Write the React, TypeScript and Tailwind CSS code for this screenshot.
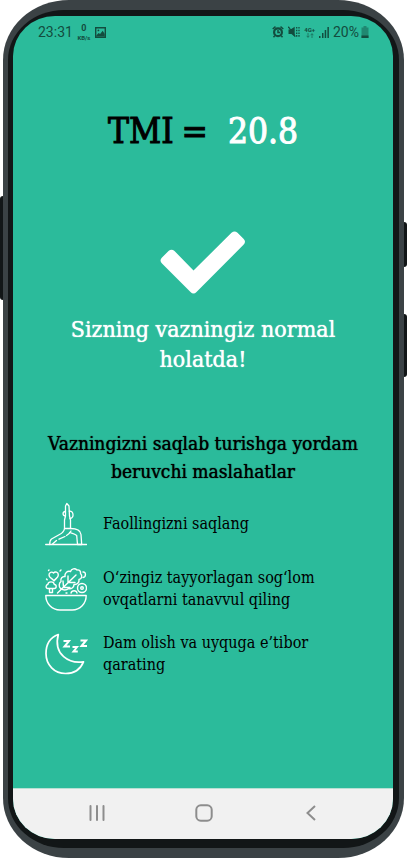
import type { ReactNode } from "react";

function StatusBar() {
  return (
    <div className="flex h-8 items-center justify-between pl-[25px] pr-6 font-['Roboto',sans-serif] text-[14px] leading-4 text-[#134c3e]">
      <div className="flex items-center gap-1">
        <span>23:31</span>
        <span className="flex w-[14px] flex-col items-center font-bold">
          <span className="text-[9px] leading-[11px]">0</span>
          <span className="text-[6px] leading-[7px]">KB/s</span>
        </span>
        <svg width="11" height="11" viewBox="0 0 11 11" fill="none" stroke="currentColor">
          <path d="M.7.7h9.600v9.600H.7z" strokeWidth="1.400" />
          <path d="M1.300 8.500l2.300-2.600 1.500 1.200 2.600-3.300L9.700 7v2.500H1.300z" fill="currentColor" stroke="none" />
          <circle cx="3.400" cy="3.400" r=".9" fill="currentColor" stroke="none" />
        </svg>
      </div>
      <div className="flex items-center gap-1">
        <svg width="12" height="12" viewBox="0 0 12 12" fill="none" stroke="currentColor">
          <circle cx="6" cy="6.300" r="3.900" strokeWidth="2.200" />
          <path d="M6 4v2.600h2M.7 3L3.500.7M11.300 3L8.500.7M2.800 9.600l-1.300 1.600M9.200 9.600l1.300 1.600" strokeWidth="1.500" />
        </svg>
        <svg width="12" height="12" viewBox="0 0 12 12" fill="currentColor" stroke="currentColor">
          <path d="M.5 3.500h2L6.700.8v10L3.500 8h-3z" stroke="none" />
          <path d="M.3.7l7 10" strokeWidth="1.200" />
          <path d="M8.700 1v10M11 1v10" fill="none" strokeWidth="1.300" strokeDasharray="1.600 1.100" />
        </svg>
        <span className="flex flex-col items-center font-bold">
          <span className="text-[6px] leading-[6px]">4G+</span>
          <svg width="8" height="5" viewBox="0 0 8 5" fill="none" stroke="currentColor" strokeWidth=".8" opacity=".7">
            <path d="M2 0v4.300M.6 2.800L2 4.300l1.400-1.500M6 5V.7M4.600 2.200L6 .7l1.400 1.500" />
          </svg>
        </span>
        <svg width="10" height="11" viewBox="0 0 10 11" fill="currentColor">
          <path d="M0 9h1.500v2H0zM3 6h1.500v5H3zM5.700 3h1.500v8H5.700zM8.400 0h1.500v11H8.400z" />
        </svg>
        <span className="flex items-center gap-[2px]">
          20%
          <svg width="8" height="12" viewBox="0 0 8 12" fill="currentColor">
            <path d="M2.500 0h3v1.500H7.500V12H.5V1.500h2z" opacity=".45" />
            <path d="M.5 9.500h7V12h-7z" />
          </svg>
        </span>
      </div>
    </div>
  );
}

function YogaIcon() {
  return (
    <svg className="shrink-0" width="42" height="44" viewBox="0 0 42 44" fill="none" stroke="white" strokeWidth="1.300" strokeLinecap="round" strokeLinejoin="round">
      <path d="M.7 42.500h41" />
      <path d="M19.500 26.500V18l1-4V4l1.300-2.500L24 4l.5 10 1 4v8.500z" />
      <path d="M20.300 9.500c-3 .5-3 4 0 4.500M24.300 9.200c4-.8 5.500 6.200.8 7.300" />
      <path d="M19.500 26.500c-.5 3.500-2 4.500-5 6L6.500 37c-1.500 1.200-1.800 3-1.800 5.500M11.500 38.500l-4 3.500M14 37.200l6-2.700M21.500 33.500c2.500-1.500 3.300-2.200 4.500-4.500" />
      <path d="M25.500 26.500c5 0 10 1.500 10.500 6l.7 10h-4.200l-.8-9c-2-1.500-4.500-2-7.200-3" />
    </svg>
  );
}

function SaladIcon() {
  return (
    <svg className="shrink-0" width="42" height="44" viewBox="0 0 42 44" fill="none" stroke="white" strokeWidth="1.400" strokeLinecap="round" strokeLinejoin="round">
      <path d="M.8 28.500h40.400c0 8-6 14.500-14 14.500H15C7 43 .8 36.500.8 28.500z" />
      <path d="M12.500 26L31 8M18.500 20l-.5-6M18 20.500h7M23 15.500V9M23 15.500h7" />
      <path d="M15.500 21.500c-2-2-1.500-5.500.5-7-1-3 1.500-5.500 4-5-.5-3.500 2.500-6 5.500-5 1-3 4.500-3.500 6.500-1.500 2.500-.5 4 1.500 3.500 3.500 2 2 1.500 5.500-1.500 6 .5 3-2 5.500-5 5 0 3-3 5-5.500 4-2 2-5.500 2-7.500 0z" />
      <path d="M9 14c-1.500-3-5-2.500-5-6 0-3 3-3.500 4.500-2 1.500-1.800 5-1 4.800 2 0 3-3 3.500-4.300 6z" />
      <path d="M4.500 21.500H2.800c-2.500 0-2-4 0-4 .5-3.500 6-3.500 6.500 0 2.500 0 2.500 4 0 4H7.500v4h-3zM4.500 21.500h3" />
      <circle cx="37" cy="21" r="4.500" />
      <circle cx="37" cy="21" r="1.300" />
      <path d="M38 5c3-.5 3.500 5 0 5.500M26 26c.8-3 5.500-3 6 0M15 4l1-1M1.500 12l.7.800M21 26h1M4 3l-.5.500" />
    </svg>
  );
}

function SleepIcon() {
  return (
    <svg className="shrink-0" width="43" height="42" viewBox="0 0 43 42" fill="none" stroke="white">
      <path d="M13.300 1.500C5 4.500 1 12 1 20.500 1 32 9.500 40.500 20.500 40.500c8.500 0 15-4.500 18-11.700C24.500 31 8 22 13.300 1.500z" strokeWidth="1.700" strokeLinejoin="round" />
      <path d="M18.500 8H24l-4.500 5.500H25M27.500 14H32l-3.500 4.500h4.300M35.500 7.500H41l-4.500 5.500H42" strokeWidth="2" />
    </svg>
  );
}

function Tip({ icon, children }: { icon: ReactNode; children: ReactNode }) {
  return (
    <li className="flex min-h-11 items-center gap-4">
      <span className="flex w-[42px] shrink-0">{icon}</span>
      <span>{children}</span>
    </li>
  );
}

function NavBar() {
  return (
    <nav className="flex h-[51px] items-center justify-between border-t border-[#b7e0d4] bg-[#f1f1f1] pb-[2px] pl-[68px] pr-[66px] text-[#8d8d8d]">
      <button aria-label="Recent apps" className="flex h-8 w-8 items-center justify-center">
        <svg width="16" height="16" viewBox="0 0 16 16" stroke="currentColor" strokeWidth="2" strokeLinecap="round">
          <path d="M1.500 1v14M8 1v14M14.500 1v14" />
        </svg>
      </button>
      <button aria-label="Home" className="flex h-8 w-8 items-center justify-center">
        <svg width="18" height="18" viewBox="0 0 18 18" fill="none" stroke="currentColor" strokeWidth="2">
          <rect x="1.300" y="1.300" width="15.400" height="15.400" rx="4.500" />
        </svg>
      </button>
      <button aria-label="Back" className="flex h-8 w-8 items-center justify-center">
        <svg width="10" height="16" viewBox="0 0 10 16" fill="none" stroke="currentColor" strokeWidth="2">
          <path d="M9 1L1.500 8 9 15" />
        </svg>
      </button>
    </nav>
  );
}

export default function App() {
  return (
    <div className="relative flex min-h-screen bg-white px-[3px]">
      <span className="absolute left-0 top-[196px] h-[104px] w-[3px] rounded-l-sm bg-[#121617]" />
      <span className="absolute right-0 top-[222px] h-[45px] w-[3px] rounded-r-sm bg-[#121617]" />
      <span className="absolute right-0 top-[314px] h-[63px] w-[3px] rounded-r-sm bg-[#121617]" />
      <div className="flex flex-1 rounded-[66px/60px] bg-[#3b4245] px-[5px] py-[10px]">
        <div className="flex flex-1 rounded-[56px/50px] bg-[#121617] pb-[9px] pl-[5px] pr-[6px] pt-[6px]">
          <div className="flex flex-1 flex-col overflow-hidden rounded-[42px/40px] bg-[#2bbb9b] font-['DejaVu_Serif_Condensed','DejaVu_Serif',serif] text-black">
            <StatusBar />
            <main className="flex flex-1 flex-col items-center px-8">
              <h1 className="mt-[60px] flex items-center gap-5 text-[35px] leading-[46px] [-webkit-text-stroke:1px_currentColor]">
                <span className="flex gap-2">
                  <span>TMI</span>
                  <span>=</span>
                </span>
                <span className="text-white">20.8</span>
              </h1>
              <svg className="mt-[77px]" width="86" height="63" viewBox="0 0 86 63" fill="white">
                <path d="M2 26.500L8.500 20q3-2.500 6 0L33.500 39.500 71.500 1.800q3-2.600 6 0l6 6q3 3 0 6L36.500 61q-3 3-6 0L2 32.500q-3-3 0-6z" />
              </svg>
              <p className="mt-5 text-center text-[23px] leading-[30px] text-white [text-shadow:0_0_1px_currentColor]">
                Sizning vazningiz normal
                <br />
                holatda!
              </p>
              <h2 className="mt-[55px] text-center text-[19px] leading-7 [text-shadow:0_0_1px_currentColor]">
                Vazningizni saqlab turishga yordam
                <br />
                beruvchi maslahatlar
              </h2>
              <ul className="mt-[17px] flex flex-col gap-[21px] self-stretch text-[16px] leading-[22px]">
                <Tip icon={<YogaIcon />}>Faollingizni saqlang</Tip>
                <Tip icon={<SaladIcon />}>
                  O‘zingiz tayyorlagan sog‘lom
                  <br />
                  ovqatlarni tanavvul qiling
                </Tip>
                <Tip icon={<SleepIcon />}>
                  Dam olish va uyquga e’tibor
                  <br />
                  qarating
                </Tip>
              </ul>
            </main>
            <NavBar />
          </div>
        </div>
      </div>
    </div>
  );
}
